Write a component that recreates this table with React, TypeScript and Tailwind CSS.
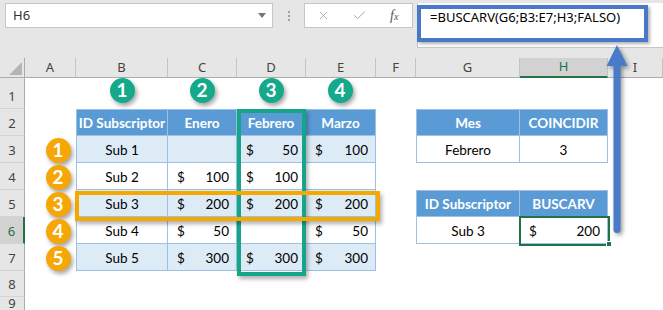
import { X, Check } from "lucide-react";
import type { ReactNode } from "react";

// Excel-like sheet: BUSCARV with COINCIDIR as column index

const cell = "font-['Lato',sans-serif] text-[13.5px] leading-[17px]";

function Rh({ n, sel, top }: { n?: number; sel?: boolean; top?: boolean }) {
  return (
    <div
      className={
        "flex justify-center border-b border-b-[#d4d4d4] font-['Noto_Sans',sans-serif] text-[13px] " +
        (top ? "items-start leading-[12px] " : "items-end pb-[3px] leading-[17px] ") +
        (sel
          ? "bg-[#d2d2d2] text-[#217346] border-r-2 border-r-[#217346]"
          : "bg-[#e6e6e6] text-[#444] border-r border-r-[#ababab]")
      }
    >
      {n}
    </div>
  );
}

function Ch({ c, sel }: { c: string; sel?: boolean }) {
  return (
    <div
      className={
        "flex items-center justify-center border-r border-r-[#c4c4c4] font-['Noto_Sans',sans-serif] text-[13px] " +
        (sel
          ? "bg-[#d2d2d2] text-[#217346] border-b-2 border-b-[#217346]"
          : "bg-[#e6e6e6] text-[#444] border-b border-b-[#ababab]")
      }
    >
      {c}
    </div>
  );
}

const E = () => <div />;

function Hd({ children, l }: { children: ReactNode; l?: boolean }) {
  return (
    <div
      className={
        cell +
        " flex items-end justify-center pb-[3px] bg-[#5b9bd5] text-white font-bold border-t border-r border-b border-[#9bc2e6] " +
        (l ? "border-l" : "")
      }
    >
      {children}
    </div>
  );
}

function Tx({ children, b, l }: { children?: ReactNode; b?: boolean; l?: boolean }) {
  return (
    <div
      className={
        cell +
        " flex items-end justify-center pb-[3px] text-black border-r border-b border-[#9bc2e6] " +
        (b ? "bg-[#ddebf7] " : "bg-white ") +
        (l ? "border-l" : "")
      }
    >
      {children}
    </div>
  );
}

function Mn({ v, b }: { v: string; b?: boolean }) {
  return (
    <div
      className={
        cell +
        " flex items-end justify-between pl-[9px] pr-[7px] pb-[3px] text-black border-r border-b border-[#9bc2e6] " +
        (b ? "bg-[#ddebf7]" : "bg-white")
      }
    >
      <span>$</span>
      <span>{v}</span>
    </div>
  );
}

function Dot({ n, teal, x, y }: { n: number; teal?: boolean; x: number; y: number }) {
  return (
    <div
      className={
        "absolute w-[25px] h-[25px] rounded-full flex items-center justify-center text-white font-bold text-[19px] font-['Lato',sans-serif] shadow-[2px_3px_4px_rgba(0,0,0,0.35)] " +
        (teal ? "bg-[#14a98b]" : "bg-[#f6a605]")
      }
      style={{ left: x - 12.5, top: y - 12.5 }}
    >
      {n}
    </div>
  );
}

export default function App() {
  return (
    <div className="relative w-[663px] h-[310px] overflow-hidden bg-white">
      {/* formula bar */}
      <div className="h-[58px] bg-[#e6e6e6] flex items-start pt-[3px]">
        <div className="ml-[5px] w-[268px] h-[25px] bg-white border border-[#c6c6c6] flex items-center pl-[7px] pr-[6px] font-['Noto_Sans',sans-serif] text-[13px] text-[#333]">
          H6
          <svg className="ml-auto" width="8" height="5" viewBox="0 0 8 5">
            <path d="M0 0h8L4 5z" fill="#777" />
          </svg>
        </div>
        <div className="ml-[15px] mt-[8px] flex flex-col gap-[2px]">
          <div className="w-[2px] h-[2px] bg-[#a0a0a0]" />
          <div className="w-[2px] h-[2px] bg-[#a0a0a0]" />
          <div className="w-[2px] h-[2px] bg-[#a0a0a0]" />
        </div>
        <div className="ml-[14px] w-[109px] h-[25px] bg-white border border-[#c6c6c6] flex items-center pl-[12px]">
          <X size={13} strokeWidth={1.6} className="text-[#a8a8a8]" />
          <Check size={15} strokeWidth={1.6} className="ml-[22px] text-[#a8a8a8]" />
          <span className="ml-[23px] font-['Liberation_Serif',serif] italic text-[14px] text-[#555]">
            f<span className="text-[10px]">x</span>
          </span>
        </div>
        <div className="relative ml-[4px] flex-1 h-[45px] bg-white border-l border-b border-[#c6c6c6] pl-[12px] pt-[5px] font-['Noto_Sans',sans-serif] text-[13px] text-black">
          =BUSCARV(G6;B3:E7;H3;FALSO)
          <div className="absolute left-[-1px] top-[2px] w-[231px] h-[37px] border-4 border-[#4a78c8] shadow-[2px_2px_3px_rgba(0,0,0,0.3)]" />
        </div>
      </div>

      {/* sheet */}
      <div className="grid grid-cols-[25px_51px_92px_69px_69px_70px_40px_104px_88px_55px] grid-rows-[20px_31px_27px_27px_27px_27px_27px_27px_26px_26px]">
        <div className="relative bg-[#e6e6e6] border-r border-r-[#ababab] border-b border-b-[#ababab]">
          <svg className="absolute left-[9px] top-[4px]" width="13" height="13" viewBox="0 0 13 13">
            <path d="M13 0V13H0z" fill="#b5b5b5" />
          </svg>
        </div>
        <Ch c="A" />
        <Ch c="B" />
        <Ch c="C" />
        <Ch c="D" />
        <Ch c="E" />
        <Ch c="F" />
        <Ch c="G" />
        <Ch c="H" sel />
        <Ch c="I" />

        <Rh n={1} />
        <E /><E /><E /><E /><E /><E /><E /><E /><E />

        <Rh n={2} />
        <E />
        <Hd l>ID Subscriptor</Hd>
        <Hd>Enero</Hd>
        <Hd>Febrero</Hd>
        <Hd>Marzo</Hd>
        <E />
        <Hd l>Mes</Hd>
        <Hd>COINCIDIR</Hd>
        <E />

        <Rh n={3} />
        <E />
        <Tx b l>Sub 1</Tx>
        <Tx b />
        <Mn v="50" b />
        <Mn v="100" b />
        <E />
        <Tx l>Febrero</Tx>
        <Tx>3</Tx>
        <E />

        <Rh n={4} />
        <E />
        <Tx l>Sub 2</Tx>
        <Mn v="100" />
        <Mn v="100" />
        <Tx />
        <E /><E /><E /><E />

        <Rh n={5} />
        <E />
        <Tx b l>Sub 3</Tx>
        <Mn v="200" b />
        <Mn v="200" b />
        <Mn v="200" b />
        <E />
        <Hd l>ID Subscriptor</Hd>
        <Hd>BUSCARV</Hd>
        <E />

        <Rh n={6} sel />
        <E />
        <Tx l>Sub 4</Tx>
        <Mn v="50" />
        <Tx />
        <Mn v="50" />
        <E />
        <Tx l>Sub 3</Tx>
        <Mn v="200" />
        <E />

        <Rh n={7} />
        <E />
        <Tx b l>Sub 5</Tx>
        <Mn v="300" b />
        <Mn v="300" b />
        <Mn v="300" b />
        <E /><E /><E /><E />

        <Rh n={8} />
        <E /><E /><E /><E /><E /><E /><E /><E /><E />

        <Rh n={9} top />
        <E /><E /><E /><E /><E /><E /><E /><E /><E />
      </div>

      {/* selection on H6 */}
      <div className="absolute left-[519px] top-[216px] w-[91px] h-[30px] border-2 border-[#217346]" />
      <div className="absolute left-[606px] top-[241px] w-[6px] h-[6px] bg-[#217346] border border-white" />

      {/* highlight boxes */}
      <div className="absolute left-[237px] top-[109px] w-[69px] h-[167px] border-4 border-[#17a589] shadow-[2px_3px_4px_rgba(0,0,0,0.3)]" />
      <div className="absolute left-[75px] top-[191px] w-[305px] h-[30px] border-4 border-[#f5a800] shadow-[2px_3px_4px_rgba(0,0,0,0.3)]" />

      <Dot n={1} teal x={122} y={90} />
      <Dot n={2} teal x={202} y={90} />
      <Dot n={3} teal x={271} y={90} />
      <Dot n={4} teal x={340} y={90} />

      <Dot n={1} x={58} y={150} />
      <Dot n={2} x={58} y={177} />
      <Dot n={3} x={58} y={204} />
      <Dot n={4} x={58} y={231} />
      <Dot n={5} x={58} y={258} />

      {/* arrow up to the formula */}
      <svg
        className="absolute left-[600px] top-[40px] drop-shadow-[2px_2px_2px_rgba(0,0,0,0.4)]"
        width="34"
        height="200"
        viewBox="0 0 34 200"
      >
        <rect x="13.5" y="22" width="7" height="171" rx="3.5" fill="#4a7bc9" />
        <path d="M17 5L27.5 26H6.5z" fill="#4a7bc9" />
      </svg>
    </div>
  );
}
